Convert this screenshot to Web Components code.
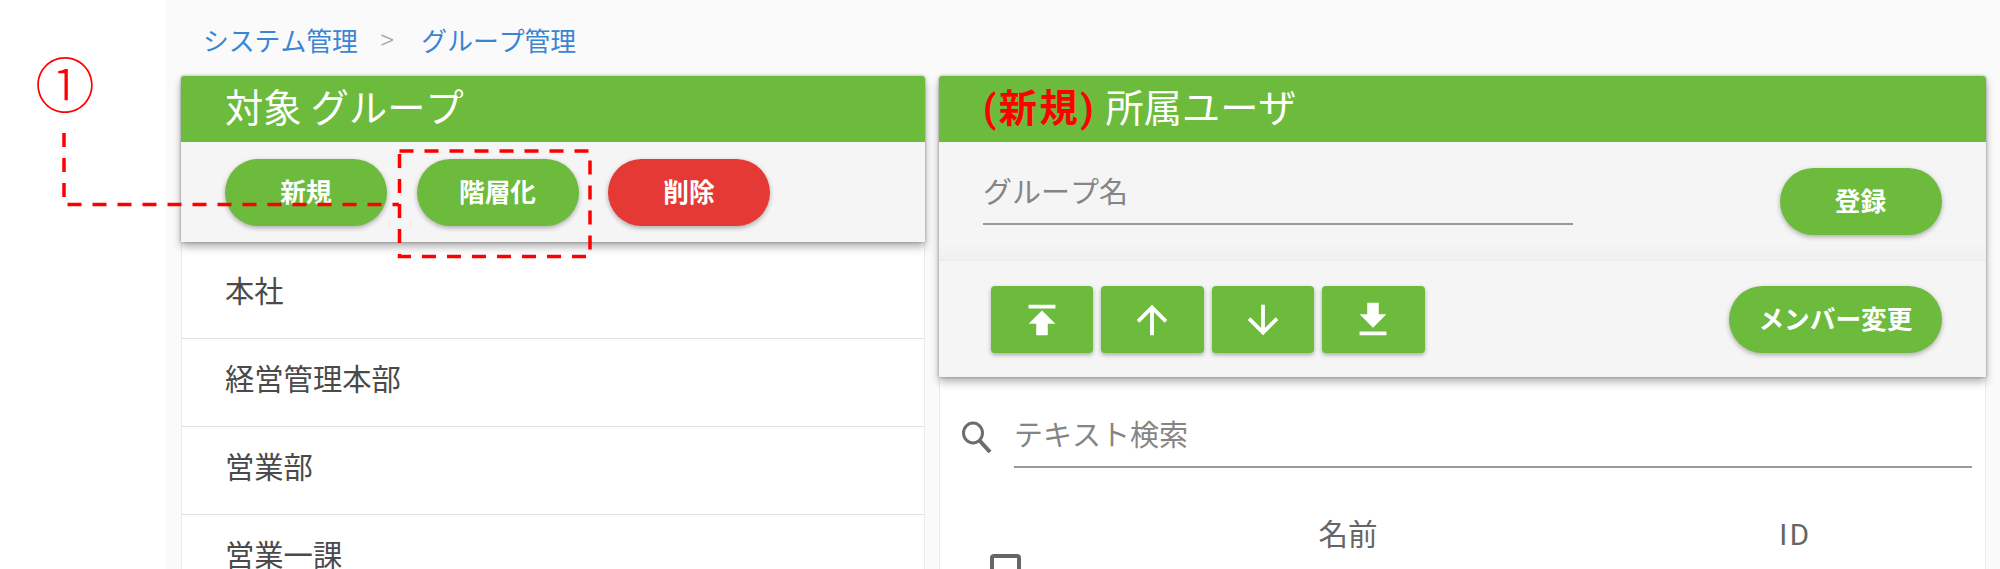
<!DOCTYPE html>
<html lang="ja">
<head>
<meta charset="utf-8">
<title>グループ管理</title>
<style>
  html, body {
    margin: 0;
    height: 569px;
    overflow: hidden;
    background: #fff;
    font-family: Roboto, "Noto Sans CJK JP", sans-serif;
    font-kerning: none;
  }
</style>
</head>
<body>
<app-shell>
  <bread-crumb></bread-crumb>
  <div slot="left">
    <panel-card>
      <span slot="title">対象 グループ</span>
      <action-bar slot="top" variant="list">
        <pill-button>新規</pill-button>
        <pill-button>階層化</pill-button>
        <pill-button color="red">削除</pill-button>
      </action-bar>
      <list-row>本社</list-row>
      <list-row>経営管理本部</list-row>
      <list-row>営業部</list-row>
      <list-row>営業一課</list-row>
    </panel-card>
  </div>
  <div slot="right">
    <panel-card>
      <span slot="title"><b style="color:#f00;letter-spacing:2.5px">(新規)</b> 所属ユーザ</span>
      <action-bar slot="top" variant="form">
        <text-field placeholder="グループ名"></text-field>
        <pill-button>登録</pill-button>
      </action-bar>
      <action-bar slot="top" variant="order">
        <div style="display:flex;gap:8px">
          <icon-button icon="top"></icon-button>
          <icon-button icon="up"></icon-button>
          <icon-button icon="down"></icon-button>
          <icon-button icon="bottom"></icon-button>
        </div>
        <pill-button>メンバー変更</pill-button>
      </action-bar>
      <search-row></search-row>
      <table-head></table-head>
    </panel-card>
  </div>
</app-shell>
<call-out></call-out>

<script>
const ICONS = {
  top: 'M5 4v2h14V4H5zm0 10h4v6h6v-6h4l-7-7-7 7z',
  up: 'M4 12l1.41 1.41L11 7.83V20h2V7.83l5.58 5.59L20 12l-8-8-8 8z',
  down: 'M20 12l-1.41-1.41L13 16.17V4h-2v12.17l-5.58-5.59L4 12l8 8 8-8z',
  bottom: 'M19 9h-4V3H9v6H5l7 7 7-7zM5 18v2h14v-2H5z'
}

class AppShell extends HTMLElement {
  constructor () {
    super()
    this.attachShadow({ mode: 'open' })
  }

  connectedCallback () {
    this.shadowRoot.innerHTML = `
    <style>
      :host { display: block; height: 569px; padding-left: 166px; box-sizing: border-box; }
      .content { height: 569px; background: #fafafa; padding: 0 14.5px 0 15px; box-sizing: border-box; overflow: hidden; }
      .columns { display: grid; grid-template-columns: 744px 1046.5px; column-gap: 14px; }
    </style>
    <div class="content">
      <slot></slot>
      <div class="columns">
        <slot name="left"></slot>
        <slot name="right"></slot>
      </div>
    </div>`
  }
}

class BreadCrumb extends HTMLElement {
  constructor () {
    super()
    this.attachShadow({ mode: 'open' })
  }

  connectedCallback () {
    this.shadowRoot.innerHTML = `
    <style>
      :host { display: flex; align-items: center; height: 76px; padding: 3px 0 0 22px; box-sizing: border-box; font-size: 25.8px; color: #3a85d3; }
      .sep { color: #aaa; font-size: 28px; font-weight: 300; margin: 0 27px 0 22px; }
    </style>
    <span>システム管理</span><span class="sep">&gt;</span><span>グループ管理</span>`
  }
}

class PanelCard extends HTMLElement {
  constructor () {
    super()
    this.attachShadow({ mode: 'open' })
  }

  connectedCallback () {
    this.shadowRoot.innerHTML = `
    <style>
      :host { display: block; }
      .top { position: relative; z-index: 1; border-radius: 3px 3px 0 0; box-shadow: 0 0 3px rgba(0,0,0,.35), 0 5px 9px rgba(0,0,0,.3); }
      .title { height: 66px; display: flex; align-items: center; padding: 0 0 8px 44px; box-sizing: border-box; background: #6cbb3c; color: #fff; font-size: 38.2px; border-radius: 3px 3px 0 0; }
      .body { height: 340px; background: #fff; border-left: 1.5px solid #ececec; border-right: 1.5px solid #ececec; padding-top: 9px; box-sizing: border-box; }
    </style>
    <div class="top">
      <div class="title"><slot name="title"></slot></div>
      <slot name="top"></slot>
    </div>
    <div class="body"><slot></slot></div>`
  }
}

class ActionBar extends HTMLElement {
  constructor () {
    super()
    this.attachShadow({ mode: 'open' })
  }

  connectedCallback () {
    this.shadowRoot.innerHTML = `
    <style>
      :host { display: flex; background: #f5f5f5; box-sizing: border-box; }
      :host([variant="list"]) { height: 100px; padding: 17px 0 0 44px; gap: 29.5px; }
      :host([variant="form"]) { height: 118px; padding: 26px 44px 0 44px; justify-content: space-between; background: linear-gradient(#f5f5f5 85%, #f0f0f0); }
      :host([variant="order"]) { height: 117px; padding: 25px 44px 0 51.5px; justify-content: space-between; border-top: 1px solid #ebebeb; }
    </style>
    <slot></slot>`
  }
}

class PillButton extends HTMLElement {
  constructor () {
    super()
    this.attachShadow({ mode: 'open' })
  }

  connectedCallback () {
    this.shadowRoot.innerHTML = `
    <style>
      :host { display: flex; align-items: center; justify-content: center; min-width: 162px; height: 67px; padding: 0 29px 4px; box-sizing: border-box; border-radius: 34px; background: #6cbb3c; color: #fff; font-size: 25.7px; font-weight: 700; white-space: nowrap; box-shadow: 0 2px 5px rgba(0,0,0,.3); }
      :host([color="red"]) { background: #e53935; }
    </style>
    <slot></slot>`
  }
}

class IconButton extends HTMLElement {
  constructor () {
    super()
    this.attachShadow({ mode: 'open' })
  }

  connectedCallback () {
    const d = ICONS[this.getAttribute('icon')]
    this.shadowRoot.innerHTML = `
    <style>
      :host { display: flex; align-items: center; justify-content: center; width: 102.500px; height: 67px; border-radius: 4px; background: #6cbb3c; box-shadow: 0 2px 4px rgba(0,0,0,.3); }
      svg { width: 46px; height: 46px; fill: #fff; }
    </style>
    <svg viewBox="0 0 24 24"><path d="${d}"/></svg>`
  }
}

class ListRow extends HTMLElement {
  constructor () {
    super()
    this.attachShadow({ mode: 'open' })
  }

  connectedCallback () {
    this.shadowRoot.innerHTML = `
    <style>
      :host { display: flex; align-items: center; height: 88px; padding: 0 0 11px 43px; box-sizing: border-box; border-bottom: 1.5px solid #e2e2e2; font-size: 29.3px; color: #4a4a4a; }
    </style>
    <slot></slot>`
  }
}

class TextField extends HTMLElement {
  constructor () {
    super()
    this.attachShadow({ mode: 'open' })
  }

  connectedCallback () {
    this.shadowRoot.innerHTML = `
    <style>
      :host { display: block; width: var(--field-width, 590px); height: 57px; box-sizing: border-box; border-bottom: 2px solid #999; font-size: 29px; color: #858585; line-height: 50px; }
    </style>
    <span>${this.getAttribute('placeholder')}</span>`
  }
}

class SearchRow extends HTMLElement {
  constructor () {
    super()
    this.attachShadow({ mode: 'open' })
  }

  connectedCallback () {
    this.shadowRoot.innerHTML = `
    <style>
      :host { display: flex; align-items: flex-end; gap: 21px; height: 82px; padding-left: 20px; padding-right: 13px; box-sizing: border-box; --field-width: 958px; }
      svg { width: 33px; height: 33px; fill: none; stroke: #6d6d6d; stroke-width: 3; margin-bottom: 15px; flex: none; }
      text-field { flex: none; }
    </style>
    <svg viewBox="0 0 33 33"><ellipse cx="13" cy="13" rx="9.5" ry="10"/><path d="M20 21l10 11" stroke-width="4"/></svg>
    <text-field placeholder="テキスト検索"></text-field>`
  }
}

class TableHead extends HTMLElement {
  constructor () {
    super()
    this.attachShadow({ mode: 'open' })
  }

  connectedCallback () {
    this.shadowRoot.innerHTML = `
    <style>
      :host { display: grid; grid-template-columns: 31px 596px 298px; padding: 32px 0 0 50px; font-size: 29.5px; color: #666; line-height: 70px; }
      .box { width: 31px; height: 31px; margin-top: 54px; box-sizing: border-box; border: 4px solid #666; border-radius: 4px; }
      .cell { text-align: center; }
      .name { margin-left: 58px; }
      .id { margin-left: 59px; letter-spacing: 2.5px; }
    </style>
    <div class="box"></div>
    <div class="cell name">名前</div>
    <div class="cell id">ID</div>`
  }
}

class CallOut extends HTMLElement {
  constructor () {
    super()
    this.attachShadow({ mode: 'open' })
  }

  connectedCallback () {
    this.shadowRoot.innerHTML = `
    <style>
      :host { position: absolute; left: 0; top: 0; width: 2000px; height: 569px; pointer-events: none; z-index: 5; }
      svg { position: absolute; left: 0; top: 0; }
      .mark { position: absolute; left: 33px; top: 46px; width: 64px; text-align: center; font-size: 60px; line-height: 84px; color: #f00; font-weight: 300; }
    </style>
    <svg width="2000" height="569" fill="none" stroke="#f00" stroke-width="3.5" stroke-dasharray="14 11">
      <path d="M64 133V204.500H399"/>
      <rect x="399.500" y="151" width="190.500" height="105.500"/>
    </svg>
    <div class="mark">①</div>`
  }
}

customElements.define('app-shell', AppShell)
customElements.define('bread-crumb', BreadCrumb)
customElements.define('panel-card', PanelCard)
customElements.define('action-bar', ActionBar)
customElements.define('pill-button', PillButton)
customElements.define('icon-button', IconButton)
customElements.define('list-row', ListRow)
customElements.define('text-field', TextField)
customElements.define('search-row', SearchRow)
customElements.define('table-head', TableHead)
customElements.define('call-out', CallOut)
</script>
</body>
</html>
